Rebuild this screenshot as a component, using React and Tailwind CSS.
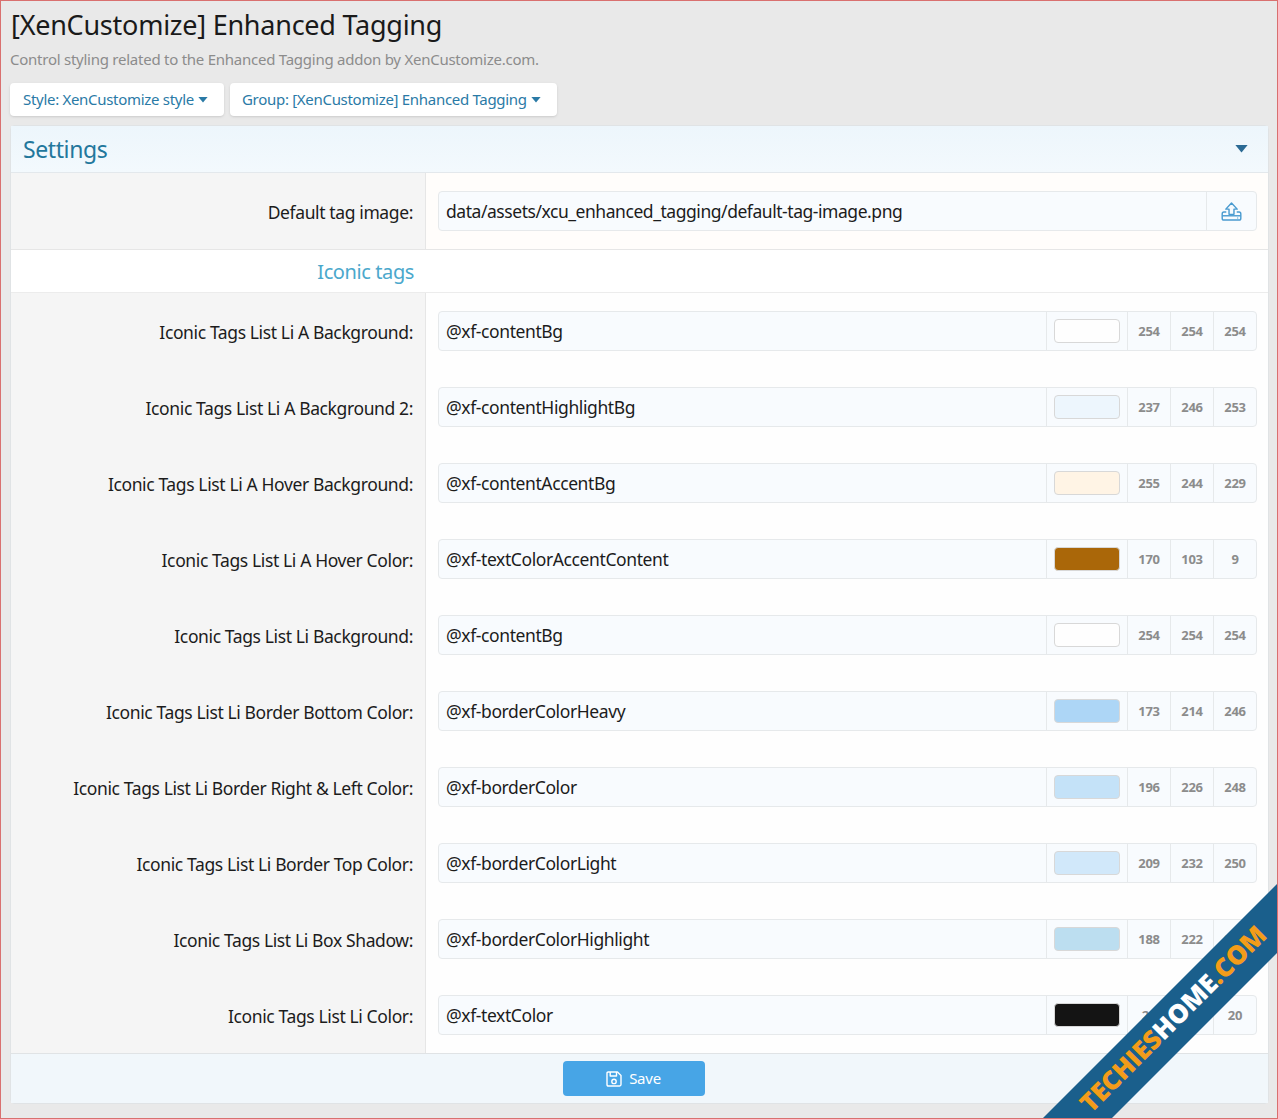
const rows = [
  { label: "Iconic Tags List Li A Background:", value: "@xf-contentBg", color: "#fefefe", rgb: [254, 254, 254] },
  { label: "Iconic Tags List Li A Background 2:", value: "@xf-contentHighlightBg", color: "#edf6fd", rgb: [237, 246, 253] },
  { label: "Iconic Tags List Li A Hover Background:", value: "@xf-contentAccentBg", color: "#fff4e5", rgb: [255, 244, 229] },
  { label: "Iconic Tags List Li A Hover Color:", value: "@xf-textColorAccentContent", color: "#aa6709", rgb: [170, 103, 9] },
  { label: "Iconic Tags List Li Background:", value: "@xf-contentBg", color: "#fefefe", rgb: [254, 254, 254] },
  { label: "Iconic Tags List Li Border Bottom Color:", value: "@xf-borderColorHeavy", color: "#add6f6", rgb: [173, 214, 246] },
  { label: "Iconic Tags List Li Border Right & Left Color:", value: "@xf-borderColor", color: "#c4e2f8", rgb: [196, 226, 248] },
  { label: "Iconic Tags List Li Border Top Color:", value: "@xf-borderColorLight", color: "#d1e8fa", rgb: [209, 232, 250] },
  { label: "Iconic Tags List Li Box Shadow:", value: "@xf-borderColorHighlight", color: "#bcdef0", rgb: [188, 222, 240] },
  { label: "Iconic Tags List Li Color:", value: "@xf-textColor", color: "#141414", rgb: [20, 20, 20] },
];

function Caret({ className }) {
  return (
    <svg viewBox="0 0 10 6" className={className} fill="currentColor">
      <path d="M0.4 0h9.2L5 5.6z" />
    </svg>
  );
}

function UploadIcon() {
  return (
    <svg viewBox="0 0 22 20" className="w-[21px] h-[19px] text-[#4a9bd0]" fill="none" stroke="currentColor" strokeWidth="1.5" strokeLinejoin="round">
      <path d="M11 1 L17 7.5 H13.6 V13 H8.4 V7.5 H5 Z" />
      <path d="M5.5 10.5 H3 Q1.2 10.5 1.2 12.5 V17 Q1.2 19 3 19 H19 Q20.8 19 20.8 17 V12.5 Q20.8 10.5 19 10.5 H16.5" />
      <path d="M1.2 14.5 H20.8" />
      <path d="M17.2 16.8 H18" />
    </svg>
  );
}

function SaveIcon() {
  return (
    <svg viewBox="0 0 16 16" className="w-4 h-4" fill="none" stroke="currentColor" strokeWidth="1.4" strokeLinejoin="round">
      <path d="M2.2 1 H11.5 L15 4.5 V13.6 Q15 15 13.6 15 H2.4 Q1 15 1 13.6 V2.2 Q1 1 2.2 1 Z" />
      <path d="M4.2 1 V5 H10.5 V1" />
      <circle cx="8" cy="10.4" r="2.2" />
    </svg>
  );
}

function Label({ children }) {
  return <div className="w-[415px] shrink-0 bg-[#f5f5f5] border-r border-[#e6e6e6] pr-3 pt-[27px] text-right leading-6 tracking-[-0.38px] text-[#1c1c1c]">{children}</div>;
}

function ColorRow({ row }) {
  return (
    <div className="flex h-[76px]">
      <Label>{row.label}</Label>
      <div className="flex-1 pl-3 pr-[11px] pt-[18px] bg-[#fefefe]">
        <div className="flex h-10 rounded border border-[#e6e9eb] bg-[#f8fbfe] text-[#1c1c1c]">
          <div className="flex-1 pl-[7px] leading-[38px] tracking-[-0.4px]">{row.value}</div>
          <div className="w-[81px] flex items-center justify-center border-l border-[#e6e9eb]">
            <div className="w-[66px] h-6 rounded-sm border border-[#d8d8d8]" style={{ backgroundColor: row.color }} />
          </div>
          {row.rgb.map((c, i) => (
            <div key={i} className="w-[43px] border-l border-[#e6e9eb] text-center text-[13px] font-bold leading-[38px] text-[#8c8c8c]">
              {c}
            </div>
          ))}
        </div>
      </div>
    </div>
  );
}

export default function App() {
  return (
    <div className="relative h-[1119px] w-[1278px] overflow-hidden border border-[#d9706f] bg-[#e9e9e9] px-[9px] font-['Noto_Sans',sans-serif] text-[17.5px] tracking-[-0.25px]">
      <h1 className="pl-px pt-[4px] text-[27px] leading-10 text-[#1a1a1a]">[XenCustomize] Enhanced Tagging</h1>
      <p className="mt-[4px] text-[15px] leading-5 text-[#8c8c8c]">Control styling related to the Enhanced Tagging addon by XenCustomize.com.</p>

      <div className="mt-[14px] flex gap-[6px] text-[15px] tracking-[-0.3px] text-[#2a7aa6]">
        <button className="flex h-[33px] w-[214px] items-center gap-1 rounded bg-white pl-[13px] shadow-sm">
          Style: XenCustomize style <Caret className="h-[6px] w-[10px]" />
        </button>
        <button className="flex h-[33px] w-[327px] items-center gap-1 rounded bg-white px-3 shadow-sm">
          Group: [XenCustomize] Enhanced Tagging <Caret className="h-[6px] w-[10px]" />
        </button>
      </div>

      <div className="mt-[9px] w-[1259px] rounded-sm border border-[#e0e3e5] bg-white">
        <div className="flex h-[47px] items-center justify-between border-b border-[#e3e8ec] bg-gradient-to-b from-[#edf6fc] to-[#f3f9fd] px-3">
          <h2 className="text-[23px] tracking-[-0.4px] text-[#23779c]">Settings</h2>
          <Caret className="mr-[7px] h-2 w-[15px] text-[#2b6a94]" />
        </div>

        <div className="flex h-[77px] border-b border-[#e6e6e6]">
          <Label>Default tag image:</Label>
          <div className="flex-1 bg-[#fffdfb] pl-3 pr-[11px] pt-[18px]">
            <div className="flex h-10 rounded border border-[#e6e9eb] bg-[#f8fbfe] text-[#1c1c1c]">
              <div className="flex-1 pl-[7px] leading-[38px] tracking-[-0.45px]">data/assets/xcu_enhanced_tagging/default-tag-image.png</div>
              <div className="flex w-[50px] items-center justify-center border-l border-[#e6e9eb]">
                <UploadIcon />
              </div>
            </div>
          </div>
        </div>

        <div className="flex h-[43px] border-b border-[#ececec]">
          <div className="w-[415px] pr-3 text-right text-[20px] leading-[44px] tracking-[-0.4px] text-[#4ba8cc]">Iconic tags</div>
        </div>

        {rows.map((row) => (
          <ColorRow key={row.label} row={row} />
        ))}

        <div className="flex h-[50px] items-start justify-center border-t border-[#e0e3e5] bg-[#f1f7fb] pr-3 pt-[7px]">
          <button className="flex h-[35px] w-[142px] items-center justify-center gap-[7px] rounded bg-[#47a5e6] text-[15px] text-white">
            <SaveIcon /> Save
          </button>
        </div>
      </div>

      {/* corner watermark */}
      <svg viewBox="0 0 236 236" className="absolute bottom-[-1px] right-[-1px] h-[236px] w-[236px]">
        <polygon points="236,0 236,69 69,236 0,236" fill="#1a5f8c" />
        <text
          x="49"
          y="231"
          transform="rotate(-45 49 231)"
          fontFamily="'Open Sans', sans-serif"
          fontWeight="800"
          fontSize="26"
          letterSpacing="-0.3"
          fill="#f39c1a"
        >
          TECHIES<tspan fill="#ffffff">HOME</tspan>.COM
        </text>
      </svg>
    </div>
  );
}
